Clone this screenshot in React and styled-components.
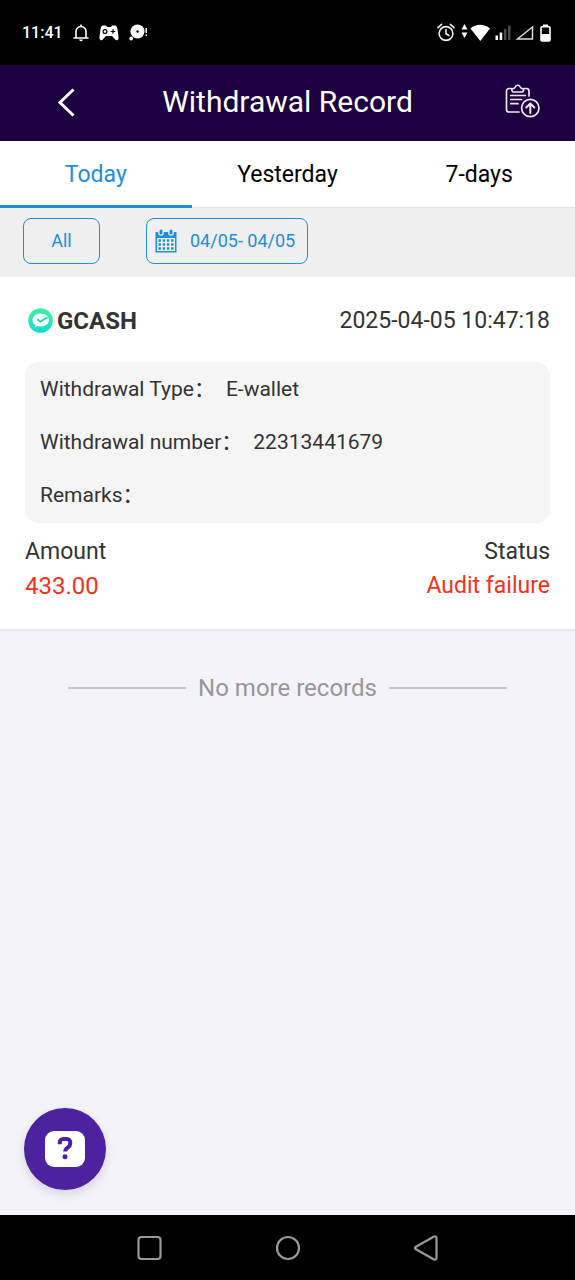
import React, { useState } from "react";
import styled, { createGlobalStyle } from "styled-components";

const GlobalStyle = createGlobalStyle`
  *, *::before, *::after { box-sizing: border-box; }
  body {
    margin: 0;
    background: #f4f3f9;
    color: #333;
    font-family: Roboto, "Noto Sans CJK SC", sans-serif;
  }
  button { font: inherit; color: inherit; background: none; border: 0; padding: 0; cursor: pointer; }
  h1, h2, p, dl, dd { margin: 0; }
  svg { display: block; flex: none; }
`;

const Screen = styled.div`
  min-height: 100vh;
  display: flex;
  flex-direction: column;
`;

const StatusBar = styled.div`
  height: 65px;
  padding: 0 24px 0 22px;
  display: flex;
  align-items: center;
  justify-content: space-between;
  background: #000;
  color: #fff;
`;

const StatusGroup = styled.div`
  display: flex;
  align-items: center;
  gap: ${(p) => p.$gap}px;
`;

const Clock = styled.span`
  font-size: 16px;
  font-weight: 500;
  line-height: 20px;
`;

const Header = styled.header`
  height: 76px;
  padding: 0 34px 0 56px;
  display: grid;
  grid-template-columns: 1fr auto 1fr;
  align-items: center;
  background: #1c003f;
  color: #fff;
`;

const Title = styled.h1`
  margin-right: 22px;
  padding-bottom: 2px;
  font-size: 30px;
  font-weight: 400;
  line-height: 36px;
`;

const HeaderButton = styled.button`
  justify-self: ${(p) => p.$side};
`;

const Tabs = styled.nav`
  display: grid;
  grid-template-columns: repeat(3, 1fr);
  background: #fff;
`;

const Tab = styled.button`
  && {
    height: 67px;
    font-size: 23px;
    line-height: 28px;
    color: ${(p) => (p.$active ? "#1e8edb" : "#000")};
    box-shadow: inset 0 ${(p) => (p.$active ? "-3px #1e8edb" : "-1px #e4e4e4")};
  }
`;

const Filters = styled.div`
  padding: 10px 23px 13px;
  display: flex;
  gap: 46px;
  background: #efefef;
`;

const FilterButton = styled.button`
  && {
    height: 46px;
    min-width: 77px;
    padding: 0 ${(p) => (p.$icon ? "12px 0 8px" : "8px")};
    display: flex;
    align-items: center;
    justify-content: center;
    gap: 13px;
    border: 1px solid #1e8edb;
    border-radius: 8px;
    color: #1e8edb;
    font-size: 18px;
    line-height: 24px;
  }
`;

const Main = styled.main`
  flex: 1;
  position: relative;
`;

const Card = styled.article`
  padding: 26px 25px 28px;
  background: #fff;
  border-bottom: 2px solid #e6e6ea;
`;

const CardHead = styled.div`
  height: 35px;
  display: flex;
  align-items: center;
  justify-content: space-between;
`;

const Wallet = styled.h2`
  padding-left: 3px;
  display: flex;
  align-items: center;
  gap: 4px;
  font-size: 24px;
  font-weight: 700;
  line-height: 28px;
`;

const Time = styled.time`
  font-size: 23px;
  line-height: 28px;
`;

const Details = styled.dl`
  margin: 24px 0 14px;
  padding: 13px 15px;
  display: flex;
  flex-direction: column;
  gap: 24px;
  border-radius: 14px;
  background: #f5f5f5;
`;

const Detail = styled.div`
  height: 29px;
  display: flex;
  align-items: center;
  gap: 11px;
  font-size: 21px;
  line-height: 29px;
`;

const Summary = styled.dl`
  display: flex;
  justify-content: space-between;
`;

const SummaryItem = styled.div`
  text-align: ${(p) => p.$align};
  font-size: 23px;
  line-height: 30px;
`;

const SummaryValue = styled.dd`
  margin-top: 4px;
  color: #f3321a;
  font-size: ${(p) => p.$size}px;
`;

const EndNote = styled.p`
  margin: 41px 68px;
  display: flex;
  align-items: center;
  gap: 12px;
  color: #96969b;
  font-size: 24px;
  line-height: 32px;
  white-space: nowrap;

  &::before, &::after {
    content: "";
    flex: 1;
    height: 2px;
    background: #c8c8cc;
  }
`;

const HelpButton = styled.button`
  && {
    position: absolute;
    left: 24px;
    bottom: 25px;
    width: 82px;
    height: 82px;
    display: grid;
    place-items: center;
    border-radius: 50%;
    background: #4c22a0;
    box-shadow: 0 4px 10px rgba(60, 40, 110, 0.16);
  }
`;

const SystemNav = styled.nav`
  height: 65px;
  display: flex;
  align-items: center;
  justify-content: center;
  gap: 112px;
  background: #000;
  color: #999;
`;

const BellIcon = () => (
  <svg width="16" height="18" viewBox="0 0 16 18" fill="none" stroke="#fff" strokeWidth="1.6">
    <path d="M1 14h14M3 13.5V7.500a5 5 0 0 1 10 0v6" strokeLinejoin="round" strokeLinecap="round" />
    <path d="M8 .6v1.500" />
    <path d="M6.200 15.500h3.600a1.800 1.800 0 0 1-3.600 0z" fill="#fff" stroke="none" />
  </svg>
);

const GamepadIcon = () => (
  <svg width="20" height="16" viewBox="0 0 20 16">
    <path d="M4 .5h3l1 1.5h4l1-1.5h3c1.5 0 2 1.5 2.400 3L19.500 12c.4 3-1.500 4-3 2.700L13 11H7l-3.500 3.700C2 16 .1 15 .5 12l1.100-8.500C2 2 2.500.5 4 .5z" fill="#fff" />
    <circle cx="6" cy="6.500" r="1.900" fill="none" stroke="#000" strokeWidth="1.200" />
    <path d="M11.700 6.500h4.600M14 4.200v4.600" stroke="#000" strokeWidth="1.200" />
  </svg>
);

const DiscIcon = () => (
  <svg width="19" height="17" viewBox="0 0 19 17" fill="#fff">
    <circle cx="8.500" cy="7.500" r="7" />
    <circle cx="2.200" cy="14.500" r="1.900" />
    <circle cx="8.500" cy="7.500" r="1.200" fill="#000" />
    <path d="M16.500 4h1.500v5h-1.500zM16.500 10.500h1.500V12h-1.500z" />
  </svg>
);

const AlarmIcon = () => (
  <svg width="18" height="19" viewBox="0 0 18 19" fill="none" stroke="#eee" strokeWidth="1.600" strokeLinecap="round">
    <circle cx="9" cy="10.500" r="6.900" />
    <path d="M9 6.500v4.200l2.800 1.800M1 4.600 4.600 1.300M17 4.600 13.400 1.300" />
  </svg>
);

const WifiIcon = () => (
  <svg width="30" height="19" viewBox="0 0 30 19" fill="#fff">
    <path d="M4.500 1 7.500 6.500h-6zM4.500 15l3-5.500h-6z" />
    <path d="M10.500 5.500C16 .5 24 .5 30 5.500L20.300 18z" />
  </svg>
);

const BarsIcon = () => (
  <svg width="16" height="16" viewBox="0 0 16 16" fill="#fff">
    <path d="M.5 10.500H3V15H.5zM4.700 7.500h2.500V15H4.700z" />
    <path d="M8.900 4h2.500v11H8.900zM13.100.5h2.500V15h-2.500z" fill="#4a4a4a" />
  </svg>
);

const NoSignalIcon = () => (
  <svg width="19" height="16" viewBox="0 0 19 16" fill="none" stroke="#ddd" strokeWidth="1.500">
    <path d="M1.500 14 16.500 2V14z" />
  </svg>
);

const BatteryIcon = () => (
  <svg width="11" height="18" viewBox="0 0 11 18">
    <path d="M3 .5h5v2H3z" fill="#fff" />
    <rect x="1" y="2.800" width="9" height="14.200" rx="1" fill="none" stroke="#fff" strokeWidth="1.600" />
    <path d="M1 10h9v7H1z" fill="#fff" />
  </svg>
);

const BackIcon = () => (
  <svg width="20" height="30" viewBox="0 0 20 30" fill="none" stroke="#fff" strokeWidth="3">
    <path d="M17.500 1.500 4 14.500l13.500 13" />
  </svg>
);

const ClipboardUploadIcon = () => (
  <svg width="36" height="38" viewBox="0 0 36 38" fill="none" stroke="#f0e6fa" strokeWidth="1.700" strokeLinecap="round" strokeLinejoin="round">
    <path d="M6.500 4.500H4A2.500 2.500 0 0 0 1.500 7v18.500A2.500 2.500 0 0 0 4 28H14M19 4.500h2.500A2.500 2.500 0 0 1 24 7V12" />
    <path d="M8.500 8C7 8 6.800 6.800 6.800 4.800 8.500 4.800 9.800 4.200 10.300 3a2.600 2.600 0 0 1 4.900 0c.5 1.200 1.800 1.800 3.500 1.800 0 2-.2 3.200-1.700 3.200z" />
    <path d="M5.800 11.500h14.500M5.800 15.500h10.700M5.800 19.700h7.200" />
    <circle cx="25.300" cy="24" r="8.700" />
    <path d="M25.300 29v-9.300M21.300 23.500l4-4 4 4" strokeWidth="2" />
  </svg>
);

const CalendarIcon = () => (
  <svg width="22" height="24" viewBox="0 0 22 24">
    <path d="M.5 3h21v20.500H.5z" fill="#1e8edb" />
    <path d="M2 9h18v13H2z" fill="#efefef" />
    <path d="M3.200 2.500h5.600V4a2.800 2.800 0 0 1-5.600 0zM13.200 2.500h5.600V4a2.800 2.800 0 0 1-5.600 0z" fill="#efefef" />
    <rect x="4.500" y=".5" width="3" height="5" rx="1.500" fill="#1e8edb" />
    <rect x="14.500" y=".5" width="3" height="5" rx="1.500" fill="#1e8edb" />
    <path d="M3.500 11.500h15M3.500 15.500h15M3.500 19.500h15" stroke="#1e8edb" strokeWidth="2.400" strokeDasharray="2.400 1.800" />
  </svg>
);

const WalletIcon = () => (
  <svg width="25" height="25" viewBox="0 0 25 25">
    <defs>
      <linearGradient id="wallet" x1="0" y1="0" x2="0" y2="1">
        <stop offset="0" stopColor="#3ff0a6" />
        <stop offset="1" stopColor="#16dccb" />
      </linearGradient>
    </defs>
    <circle cx="12.500" cy="12.500" r="12.300" fill="url(#wallet)" />
    <path d="M12.500 5.500c5 0 8.500 2.900 8.500 6.600s-3.500 6.400-8.500 6.400c-1 0-2-.1-2.800-.4L6.800 19.600l.3-2.600C5.200 15.800 4.500 14 4.500 12.100c0-3.700 3.200-6.600 8-6.600z" fill="#fff" />
    <path d="m9 11 3.200 2.600 7.300-4.400" fill="none" stroke="#20d9a8" strokeWidth="1.800" />
  </svg>
);

const HelpIcon = () => (
  <svg width="42" height="38" viewBox="0 0 42 38" fill="none">
    <rect x="1" y="1" width="40" height="36" rx="9" fill="#fff" />
    <path d="M15.800 14.200V12.200a3.300 3.300 0 0 1 3.300-3.300h3.800a3.300 3.300 0 0 1 3.300 3.300v1.600c0 1.600-1 2.600-2.300 3.500-1.600 1.100-2.700 1.900-2.700 4.200" stroke="#4c22a0" strokeWidth="4" />
    <circle cx="21" cy="26.800" r="2.500" fill="#4c22a0" />
  </svg>
);

const SquareIcon = () => (
  <svg width="26" height="26" viewBox="0 0 26 26" fill="none" stroke="currentColor" strokeWidth="2.200">
    <rect x="1.500" y="2" width="22" height="22" rx="3" />
  </svg>
);

const CircleIcon = () => (
  <svg width="26" height="26" viewBox="0 0 26 26" fill="none" stroke="currentColor" strokeWidth="2.200">
    <circle cx="13" cy="13" r="11" />
  </svg>
);

const TriangleIcon = () => (
  <svg width="26" height="26" viewBox="0 0 26 26" fill="none" stroke="currentColor" strokeWidth="2.200" strokeLinejoin="round">
    <path d="M21 1.500 3 11.700q-2 1.300 0 2.600L21 24.500q2.500.8 2.500-1.800V3.300Q23.500.7 21 1.500z" />
  </svg>
);

const tabs = ["Today", "Yesterday", "7-days"];

const details = [
  ["Withdrawal Type：", "E-wallet"],
  ["Withdrawal number：", "22313441679"],
  ["Remarks：", ""],
];

export default function App() {
  const [active, setActive] = useState("Today");

  return (
    <Screen>
      <GlobalStyle />
      <StatusBar>
        <StatusGroup $gap={10}>
          <Clock>11:41</Clock>
          <BellIcon />
          <GamepadIcon />
          <DiscIcon />
        </StatusGroup>
        <StatusGroup $gap={5}>
          <AlarmIcon />
          <WifiIcon />
          <BarsIcon />
          <NoSignalIcon />
          <BatteryIcon />
        </StatusGroup>
      </StatusBar>

      <Header>
        <HeaderButton $side="start" aria-label="Back"><BackIcon /></HeaderButton>
        <Title>Withdrawal Record</Title>
        <HeaderButton $side="end" aria-label="Submit record"><ClipboardUploadIcon /></HeaderButton>
      </Header>

      <Tabs>
        {tabs.map((name) => (
          <Tab key={name} $active={name === active} onClick={() => setActive(name)}>{name}</Tab>
        ))}
      </Tabs>

      <Filters>
        <FilterButton>All</FilterButton>
        <FilterButton $icon><CalendarIcon />04/05- 04/05</FilterButton>
      </Filters>

      <Main>
        <Card>
          <CardHead>
            <Wallet><WalletIcon />GCASH</Wallet>
            <Time dateTime="2025-04-05T10:47:18">2025-04-05 10:47:18</Time>
          </CardHead>
          <Details>
            {details.map(([label, value]) => (
              <Detail key={label}>
                <dt>{label}</dt>
                <dd>{value}</dd>
              </Detail>
            ))}
          </Details>
          <Summary>
            <SummaryItem $align="left">
              <dt>Amount</dt>
              <SummaryValue $size={24}>433.00</SummaryValue>
            </SummaryItem>
            <SummaryItem $align="right">
              <dt>Status</dt>
              <SummaryValue $size={23}>Audit failure</SummaryValue>
            </SummaryItem>
          </Summary>
        </Card>
        <EndNote>No more records</EndNote>
        <HelpButton aria-label="Help"><HelpIcon /></HelpButton>
      </Main>

      <SystemNav aria-label="System">
        <button aria-label="Recent apps"><SquareIcon /></button>
        <button aria-label="Home"><CircleIcon /></button>
        <button aria-label="Back"><TriangleIcon /></button>
      </SystemNav>
    </Screen>
  );
}
